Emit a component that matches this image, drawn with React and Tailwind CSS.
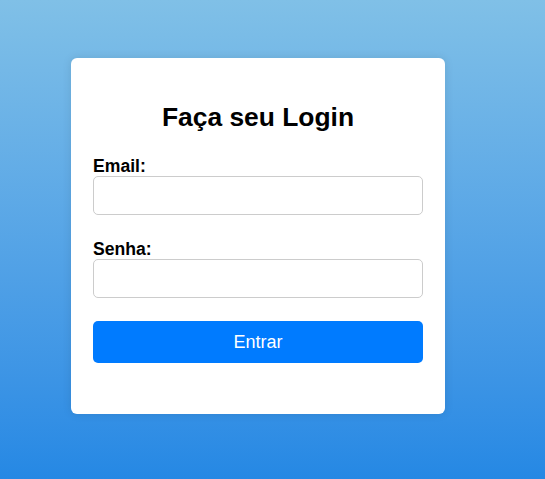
import React, { useState } from 'react';

export default function App() {
  const [email, setEmail] = useState('');
  const [senha, setSenha] = useState('');

  return (
    <div
      className="min-h-[479px] w-full bg-gradient-to-b from-[#80c0e7] to-[#2588e4] pt-[58px] pl-[71px]"
      style={{ fontFamily: '"Liberation Sans", Arial, sans-serif' }}
    >
      {/* Login card */}
      <div className="w-[374px] h-[356px] bg-white rounded-md shadow-[0_0_10px_rgba(0,0,0,0.1)] px-[22px] pt-[44px]">
        <h2 className="text-[26.4px] leading-[30px] font-bold text-black text-center">
          Faça seu Login
        </h2>

        <form className="mt-[24px] flex flex-col" onSubmit={(e) => e.preventDefault()}>
          <label className="text-[17.6px] leading-[20px] font-bold text-black">Email:</label>
          <input
            type="email"
            value={email}
            onChange={(e) => setEmail(e.target.value)}
            className="h-[39px] w-full border border-[#cccccc] rounded-[5px] px-2 outline-none"
          />

          <label className="mt-[24px] text-[17.6px] leading-[20px] font-bold text-black">Senha:</label>
          <input
            type="password"
            value={senha}
            onChange={(e) => setSenha(e.target.value)}
            className="h-[39px] w-full border border-[#cccccc] rounded-[5px] px-2 outline-none"
          />

          <button
            type="submit"
            className="mt-[23px] h-[42px] w-full bg-[#007bff] text-white text-[18px] rounded-[5px]"
          >
            Entrar
          </button>
        </form>
      </div>
    </div>
  );
}
